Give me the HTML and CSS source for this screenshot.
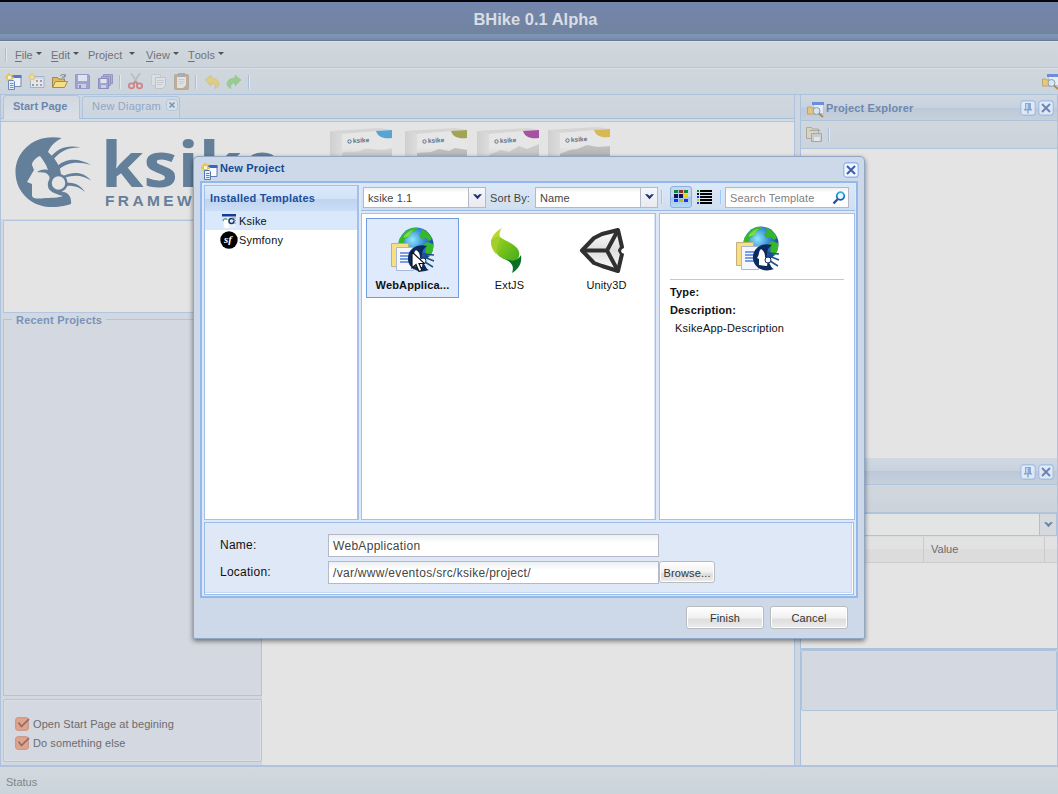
FILE: index.html
```
<!DOCTYPE html>
<html lang="en">
<head>
<meta charset="utf-8">
<title>BHike 0.1 Alpha</title>
<link rel="stylesheet" href="styles.css">
</head>
<body>
<svg class="defs" width="0" height="0" aria-hidden="true">
  <defs>
    <linearGradient id="boxside" x1="0" x2="1"><stop offset="0" stop-color="#cfcfcf"/><stop offset="1" stop-color="#dcdcdc"/></linearGradient>
    <linearGradient id="boxface" x1="0" y1="0" x2="0" y2="1"><stop offset=".45" stop-color="#e6e6e6"/><stop offset="1" stop-color="#b2b2b2"/></linearGradient>
    <radialGradient id="sea" cx=".4" cy=".35" r=".7"><stop offset="0" stop-color="#8fe9fa"/><stop offset=".45" stop-color="#3a8fdc"/><stop offset="1" stop-color="#122c8a"/></radialGradient>
    <linearGradient id="leaf" x1="0" y1="0" x2="1" y2="1"><stop offset="0" stop-color="#9bd21c"/><stop offset="1" stop-color="#3fa81c"/></linearGradient>
    <linearGradient id="lens" x1="0" y1="0" x2="0" y2="1"><stop offset="0" stop-color="#35b0dc"/><stop offset="1" stop-color="#1d55a8"/></linearGradient>
    <symbol id="head" viewBox="0 0 78 70">
      <path d="M46.700 1C20-4 .5 14 .5 35S18 71 38 70c8 0 14-2 18-3 1-8-4-12-8-12-8-3-8-15-2-17 0-8-6-17-13-23 3-7 8-11 13.700-14z"/>
      <path class="face" d="M25 19c-5 2-8 6-8 9l2 5-7 12 5 2v12c1 3 7 3 13 2 10 0 16-1 18-2-8-2-15-5-15-10-1-5 3-7 1-10-3-5-7-3-12-4 3-2 6-3 11-2-2-6-5-10-8-14z"/>
      <circle class="ring" cx="43.500" cy="46" r="8"/>
      <path class="hair" d="M34 22C43 10 53 8 66 10.500 54 10 46 13 37 24zM40 31c11-11 24-10 36-3-14-4-24-3-34 6zM48 39c11-5 21-4 28 4.500-9-6-17-6-27-2.500zM52 46c8-1 14 3 18 9-6-5-11-7-18-6z"/>
    </symbol>
    <symbol id="newproj" viewBox="0 0 17 17">
      <path fill="#f8fafd" stroke="#5d79b4" d="M5.500 3.500h10.500v10h-10.500z"/><path fill="#3b64c8" d="M5 2h11.500v3h-11.500z"/>
      <path fill="#f4c430" d="M3 0h2l.3 2L7 1l1 1-1.200 1.700L9 4v2l-2 .2L7.500 8 6 8.500 4.500 7 3 8.500 1.500 8 2 6 0 5.500v-2L2 3.500 1 2l1-1 1 .7z"/><path fill="#fff8be" d="M3 3h3v3h-3z"/>
      <path fill="#e9f1fc" stroke="#5078ba" d="M3.500 7.500h5l1 1v8h-6z"/><path stroke="#5b82cc" d="M5 10.500h3.500M5 12.500h3.500M5 14.500h3.500"/>
    </symbol>
    <symbol id="newdiag" viewBox="0 0 17 17">
      <path fill="#f6f8fc" stroke="#8195b8" d="M2.500 3.500h13.500v11h-13.500z"/><path fill="#d7deea" d="M3 4h12.500v2h-12.500z"/>
      <path fill="#cd625c" d="M8 7h2v2h-2zM12 11h2v2h-2z"/><path fill="#4178c8" d="M12 7h2v2h-2zM4 11h2v2h-2z"/><path fill="#53a55a" d="M8 11h2v2h-2z"/>
      <path fill="#f2c84b" d="M3 0h1.500l.5 2 2-1 .5 1-1 1.500L8 4v1l-2 .5L7 7l-1 1-2-1.500L2 8 1 7l1-2-2-.5v-1l2-.5-1-1.500 1-1z"/><path fill="#fff8be" d="M3 3h2v2h-2z"/>
    </symbol>
    <symbol id="folder" viewBox="0 0 17 17">
      <path fill="#e0b640" stroke="#94742c" d="M1.500 14.500v-10h5l1 1.500h6v3"/><path fill="#ffe174" stroke="#9b7a30" d="M1.500 14.500l3-6h12l-3 6z"/><path fill="none" stroke="#5b6a7c" d="M9 3c2-2 4-2 5 0m0 1V1m0 3h-3"/>
    </symbol>
    <symbol id="disk" viewBox="0 0 17 17">
      <path fill="#7c7bc8" stroke="#6a68b4" d="M1.500 1.500h13l1 1v13h-14z"/><path fill="#eef1fa" d="M4 2h9v6h-9z"/><path fill="#c9cbe6" d="M4 11h8v4h-8z"/><path fill="#55529d" d="M5 12h2v3h-2z"/>
    </symbol>
    <symbol id="disks" viewBox="0 0 17 17">
      <path fill="#8f8dcc" stroke="#6361ae" d="M6.500 1.500h9v9h-9z"/><path fill="#8f8dcc" stroke="#6361ae" d="M4.500 3.500h9v9h-9z"/><path fill="#7c7bc8" stroke="#5553a5" d="M1.500 5.500h10v10h-10z"/><path fill="#eef1fa" d="M3.500 6h6v4h-6z"/><path fill="#c9cbe6" d="M4 12h5v3h-5z"/>
    </symbol>
    <symbol id="cut" viewBox="0 0 17 17">
      <path fill="none" stroke="#a2abb6" stroke-width="1.700" d="M4 0l6.500 10M13 0L6.500 10"/><ellipse cx="4.500" cy="12.800" rx="2.700" ry="2.500" fill="none" stroke="#d54240" stroke-width="1.800"/><ellipse cx="12.500" cy="12.800" rx="2.700" ry="2.500" fill="none" stroke="#d54240" stroke-width="1.800"/><path stroke="#d54240" stroke-width="1.800" d="M6 11l2.500-2 2.500 2"  fill="none"/>
    </symbol>
    <symbol id="copy" viewBox="0 0 17 17">
      <path fill="#eee" stroke="#bbb" d="M1.500 1.500h9v11h-9z"/><path fill="#f3f3f3" stroke="#aaa" d="M5.500 4.500h10v8l-3 3h-7z"/><path stroke="#bbb" d="M7 7.500h7M7 9.500h7M7 11.500h5"/>
    </symbol>
    <symbol id="paste" viewBox="0 0 17 17">
      <rect x="1.500" y="1.500" width="14" height="15" rx="1" fill="#b58d5c" stroke="#a08a6d"/><path fill="#eeeeec" d="M4 4h9v8l-3 3H4z"/><path fill="#8d8d8d" d="M5 0h7v4h-7z"/><path stroke="#c5c5c5" d="M5.500 6.500h6M5.500 8.500h6M5.500 10.500h5"/>
    </symbol>
    <symbol id="undo" viewBox="0 0 17 17"><path fill="#ecc934" stroke="#c9a33c" stroke-width=".6" d="M2 7l6-5v3c5 0 8 3 8 6 0 2-2 4-4 4.500 1-3 0-5.500-4-5.500v3z"/></symbol>
    <symbol id="redo" viewBox="0 0 17 17"><path fill="#6cc850" stroke="#69a968" stroke-width=".6" d="M15 7L9 2v3c-5 0-8 3-8 6 0 2 2 4 4 4.500-1-3 0-5.500 4-5.500v3z"/></symbol>
    <symbol id="explorer" viewBox="0 0 17 17">
      <path fill="#eef3fb" stroke="#b5c2da" d="M6.500 2.500h10v10h-10z"/><path fill="#557dd8" d="M5 1h12v3h-12z"/><path fill="#f1c65b" stroke="#af8432" stroke-width=".7" d="M.5 13V6h3l1 1h4v6z"/><circle cx="9.500" cy="10" r="3.500" fill="#d8ecf6" stroke="#7893aa"/><path stroke="#a67b3c" stroke-width="2" d="M12 12.500l4 3.500"/>
    </symbol>
    <symbol id="x" viewBox="0 0 16 16"><rect x=".75" y=".75" width="14.500" height="14.500" rx="3" fill="#f0f6ff" stroke="#94b8ec" stroke-width="1.300"/><path d="M4 4l8 8M12 4l-8 8" stroke="#3e5da7" stroke-width="2"/></symbol>
    <symbol id="pin" viewBox="0 0 16 16"><rect x=".75" y=".75" width="14.500" height="14.500" rx="3" fill="#f0f6ff" stroke="#94b8ec" stroke-width="1.300"/><path fill="#6695cf" d="M5 3h6v6h1v1.500H8.700v3H7.300v-3H4V9h1z"/><path fill="#b9d3f2" d="M6 4h2v5H6z"/></symbol>
    <symbol id="web" viewBox="0 0 46 46">
      <circle cx="27" cy="18" r="17.500" fill="url(#sea)"/>
      <path fill="#35b82a" d="M12 10C16 3 23 0 29 1l-3 3-4 1-1 4-5 3-2 7-4-1c-1-3 0-6 2-8zM32 2c6 2 9 5 11 10l-3 2-3-3-5 1-2-4 3-2zM38 15l6 2c1 5-1 10-4 13l-4-5 1-4-3-3z"/>
      <path fill="#9bea57" opacity=".7" d="M15 9c4-5 7-6 10-6l-3 2-1 4-6 2z"/>
      <path fill="#f7df86" stroke="#c4b078" d="M2.500 16.500h17v23h-17z"/>
      <path fill="#f4f7ff" stroke="#a7b8d8" d="M7.500 20.500h17v23h-17z"/><path stroke="#5381d9" stroke-width="1.400" d="M11 26h11M11 29h11M11 32h11M11 35h11"/>
      <path fill="#0b2a5e" d="M38 19C27 16 18 23 19 33c1 9 11 14 21 10-3-1-3-4-5-6-3-3-3-5-2-8 1-4-1-5 5-10z"/>
      <path fill="#fff" d="M27 23c-3 3-1 5-4 9l2 1v6l8 1 1-6-3-3c0-4-1-6-4-8z"/><circle cx="34" cy="34" r="3" fill="#fff" stroke="#0b2a5e"/><path fill="none" stroke="#214e88" stroke-width="1.500" d="M33 27l12 1M35 30l10 4M36 35l8 5"/>
    </symbol>
  </defs>
</svg>

<div class="app">
  <header class="title">BHike 0.1 Alpha</header>
  <nav class="menubar"><i class="sep"></i>
    <span class="mi file"><u>F</u>ile</span><span class="mi edit"><u>E</u>dit</span><span class="mi proj">Project</span><span class="mi view"><u>V</u>iew</span><span class="mi tools"><u>T</u>ools</span>
  </nav>
  <div class="toolbar">
    <svg class="ic strong"><use href="#newproj"/></svg><svg class="ic"><use href="#newdiag"/></svg><svg class="ic strong"><use href="#folder"/></svg><svg class="ic"><use href="#disk"/></svg><svg class="ic"><use href="#disks"/></svg><i class="sep"></i>
    <svg class="ic"><use href="#cut"/></svg><svg class="ic faint"><use href="#copy"/></svg><svg class="ic"><use href="#paste"/></svg><i class="sep"></i>
    <svg class="ic"><use href="#undo"/></svg><svg class="ic"><use href="#redo"/></svg><i class="sep"></i>
    <svg class="ic last"><use href="#explorer"/></svg>
  </div>
  <main class="work">
    <section class="left">
      <div class="tabs"><div class="tab on">Start Page</div><div class="tab">New Diagram<svg class="tabx" viewBox="0 0 12 12"><rect x=".5" y=".5" width="11" height="11" rx="3"/><path d="M3.500 3.500l5 5M8.500 3.500l-5 5"/></svg></div></div>
      <div class="strip"></div>
      <div class="start">
        <div class="brand">
          <svg class="headlogo"><use href="#head"/></svg>
          <svg class="wordmark" viewBox="0 0 190 86"><text class="w1" x="-4" y="63" textLength="181" lengthAdjust="spacingAndGlyphs">ksike</text><text class="w2" x="0" y="81.500">FRAMEWORK</text></svg>
          <svg class="boxes" viewBox="0 0 284 90">
            <g><path fill="url(#boxside)" d="M0 4L12 7v83H0z"/><path fill="#d5d5d5" d="M0 4L50 1l12 2-50 4z"/><path fill="url(#boxface)" d="M12 7l50-4v40H12z"/><path fill="#57a4d4" d="M46 4l16-1v8c-9 1-14-1-16-7z"/><path fill="#aaa" d="M12 26c8-3 13 1 20-3s15 3 30-2v18H12z" opacity=".3"/><circle cx="19.500" cy="14.500" r="1.700" class="mini"/><text x="23" y="16" transform="rotate(-3 23 16)">ksike</text></g>
            <g transform="translate(75 0)"><path fill="url(#boxside)" d="M0 4L12 7v83H0z"/><path fill="#d5d5d5" d="M0 4L50 1l12 2-50 4z"/><path fill="url(#boxface)" d="M12 7l50-4v40H12z"/><path fill="#a0a454" d="M46 4l16-1v8c-9 1-14-1-16-7z"/><path fill="#999" d="M12 26l14-1 8-3 10 2 6-3 12 2v10H12z" opacity=".5"/><circle cx="19.500" cy="14.500" r="1.700" class="mini"/><text x="23" y="16" transform="rotate(-3 23 16)">ksike</text></g>
            <g transform="translate(147 0)"><path fill="url(#boxside)" d="M0 4L12 7v83H0z"/><path fill="#d5d5d5" d="M0 4L50 1l12 2-50 4z"/><path fill="url(#boxface)" d="M12 7l50-4v40H12z"/><path fill="#a353a1" d="M46 4l16-1v8c-9 1-14-1-16-7z"/><path fill="#aaa" d="M12 28l12-5 8 2 10-6 8 3 12-5v18H12z" opacity=".45"/><circle cx="19.500" cy="14.500" r="1.700" class="mini"/><text x="23" y="16" transform="rotate(-3 23 16)">ksike</text></g>
            <g transform="translate(218 -1)"><path fill="url(#boxside)" d="M0 4L12 7v83H0z"/><path fill="#d5d5d5" d="M0 4L50 1l12 2-50 4z"/><path fill="url(#boxface)" d="M12 7l50-4v40H12z"/><path fill="#d6b954" d="M46 4l16-1v8c-9 1-14-1-16-7z"/><path fill="#888" d="M12 28l10-4 7-1 10-4 11 2 12-1v18H12z" opacity=".4"/><circle cx="19.500" cy="14.500" r="1.700" class="mini"/><text x="23" y="16" transform="rotate(-3 23 16)">ksike</text></g>
          </svg>
        </div>
        <div class="sidecol">
          <div class="news"></div>
          <fieldset class="recent"><legend>Recent Projects</legend></fieldset>
          <div class="opts">
            <label><svg viewBox="0 0 15 14"><rect x=".7" y=".7" width="12.600" height="12.600" rx="2"/><path d="M3.500 5.500l3 4L14 2"/></svg>Open Start Page at begining</label>
            <label><svg viewBox="0 0 15 14"><rect x=".7" y=".7" width="12.600" height="12.600" rx="2"/><path d="M3.500 5.500l3 4L14 2"/></svg>Do something else</label>
          </div>
        </div>
      </div>
    </section>
    <aside class="right">
      <div class="phead"><svg class="ic strong"><use href="#explorer"/></svg><b>Project Explorer</b><svg class="tool push"><use href="#pin"/></svg><svg class="tool"><use href="#x"/></svg></div>
      <div class="ptools"><svg class="pic" viewBox="0 0 17 17"><path fill="#ddd2ae" stroke="#96938a" d="M.5 12.500V1.500h5l1 1.500h6v9.500zM3.500 4.500h11"/><path fill="#c5c7ca" stroke="#898f99" d="M5.500 7.500h10v8h-10z"/><path fill="#eee" d="M8 11h6v4H8z"/></svg><i class="sep"></i></div>
      <div class="tree"></div>
      <div class="phead two"><svg class="tool push"><use href="#pin"/></svg><svg class="tool"><use href="#x"/></svg></div>
      <div class="ptools two"></div>
      <div class="combo wide"><span></span><i class="arr"><svg viewBox="0 0 10 6"><path d="M0 0h3l2 2 2-2h3L5 5.500z"/></svg></i></div>
      <div class="ghead"><span></span><span>Value</span><span></span></div>
      <div class="gbody"></div>
      <div class="desc"></div>
      <div class="rest"></div>
    </aside>
  </main>
  <footer class="status">Status</footer>
</div>

<div class="dialog" role="dialog">
  <div class="dhead"><svg class="ic"><use href="#newproj"/></svg><b>New Project</b><svg class="tool push"><use href="#x"/></svg></div>
  <div class="dbody">
    <div class="cols">
      <div class="tpl">
        <div class="tplhead">Installed Templates</div>
        <div class="node sel"><svg viewBox="0 0 18 18"><path fill="#e8eef5" d="M3 3h13v13H3z"/><path fill="#173c98" d="M2 2h14v2.500H2z"/><path fill="none" stroke="#57ad83" stroke-width="1.500" d="M3 9c1-3 3-3 4-1"/><path fill="#fff" d="M4 8h4l1 8H4z"/><circle cx="11.500" cy="9" r="2.500" fill="none" stroke="#163d70" stroke-width="1.500"/><path stroke="#8093ae" d="M12 6h4M13 8.500h3M14 11h2"/></svg>Ksike</div>
        <div class="node"><svg viewBox="0 0 18 18"><circle cx="9" cy="9" r="8.700"/><text x="4" y="12" class="sf">sf</text></svg>Symfony</div>
      </div>
      <div class="mainc">
        <div class="dtools">
          <div class="combo c1"><span>ksike 1.1</span><i class="arr"><svg viewBox="0 0 10 6"><path d="M0 0h3l2 2 2-2h3L5 5.500z"/></svg></i></div>
          <span class="sortby">Sort By:</span>
          <div class="combo c2"><span>Name</span><i class="arr"><svg viewBox="0 0 10 6"><path d="M0 0h3l2 2 2-2h3L5 5.500z"/></svg></i></div>
          <i class="sep a"></i>
          <div class="vbtn"><svg viewBox="0 0 16 16" shape-rendering="crispEdges"><path fill="#128234" d="M1 1h4v3H1zM11 1h4v3h-4z"/><path fill="#943119" d="M6 1h4v3H6z"/><path fill="#101060" d="M1 5h4v4H1zM6 5h4v4H6z"/><path fill="#f4cd19" d="M11 5h4v4h-4z"/><path fill="#1635ee" d="M1 10h4v3H1zM11 10h4v3h-4z"/><path fill="#c7b919" d="M6 10h4v3H6z"/><path stroke="#a9cbee" stroke-width="1" d="M5.500 0v14M10.500 0v14"/></svg></div>
          <svg class="listic" viewBox="0 0 16 16" shape-rendering="crispEdges"><path d="M4 1h12v2H4zM4 4h12v2H4zM4 7h12v2H4zM4 10h12v2H4zM4 13h12v2H4zM1 4h2v2H1z"/><path fill="#00902a" d="M1 1h2v2H1z"/><path fill="#1635ee" d="M1 7h2v2H1zM1 13h2v2H1z"/><path fill="#d9c91b" d="M1 10h2v2H1z"/></svg>
          <i class="sep b"></i>
          <div class="search"><span>Search Template</span><svg viewBox="0 0 14 14"><circle cx="8.500" cy="5" r="3.800" fill="#e7f8fe" stroke="url(#lens)" stroke-width="1.800"/><path d="M5.600 8.300L1.500 12.500" stroke="#1d4f9c" stroke-width="2.300"/></svg></div>
        </div>
        <div class="panes">
          <div class="gallery">
            <div class="item on"><svg viewBox="1 0 46 46"><use href="#web" width="46" height="46"/></svg><span>WebApplica...</span></div>
            <div class="item"><svg viewBox="4 0 46 46"><path fill="#bdd62b" d="M19 1C5 9 6 19 13 27c7-3 7-9 5-14-2-5-2-8 1-12z"/><path fill="url(#leaf)" d="M17 10c-1 7-5 10-3 17 4 5 12 7 16 9 7-4 8-10 4-15-4-5-12-7-17-11z"/><path fill="#087025" d="M38 28c-3 6-9 7-15 4 7 5 8 8 6 14 8-5 10-11 9-18z"/><path fill="#8fc928" opacity=".6" d="M8 13c0 6 3 11 7 14l3-9-2-9z"/></svg><span>ExtJS</span></div>
            <div class="item"><svg class="unity" viewBox="0 0 46 46"><defs><linearGradient id="un" x1="0" y1="0" x2="0" y2="1"><stop offset="0" stop-color="#fff"/><stop offset=".5" stop-color="#ddd"/><stop offset="1" stop-color="#fff"/></linearGradient></defs><path fill="url(#un)" stroke="#303030" stroke-width="4" stroke-linejoin="round" d="M3 23.500L15 11l8-4 16-4 4 17-2 3.500 2 3.500-4 17-16-5-8-3z"/><path fill="none" stroke="#303030" stroke-width="4" d="M3 23.500h25M28 23.500L39 3M28 23.500L39 44"/><path fill="#fff" d="M43 22l3-1v6l-3-1-1-2z"/></svg><span>Unity3D</span></div>
          </div>
          <div class="preview"><svg viewBox="0 0 46 46"><use href="#web"/></svg><hr><b>Type:</b><b>Description:</b><p>KsikeApp-Description</p></div>
        </div>
      </div>
    </div>
    <div class="form">
      <div class="frow"><label>Name:</label><div class="field">WebApplication</div></div>
      <div class="frow"><label>Location:</label><div class="field">/var/www/eventos/src/ksike/project/</div><div class="btn browse">Browse...</div></div>
    </div>
  </div>
  <div class="actions"><div class="btn">Finish</div><div class="btn">Cancel</div></div>
</div>
<svg class="cursor" viewBox="0 0 14 22"><path d="M1 1v16l4-3.500 3 7 3-1.300-3-6.700h5.500z"/></svg>
</body>
</html>
```

FILE: styles.css
```
* { box-sizing: border-box; }
body { margin: 0; width: 1058px; height: 794px; overflow: hidden; font: 11px/14px "Liberation Sans", Arial, sans-serif; color: #6b6c6f; background: #e4e4e4; }
svg { display: block; flex: none; }
.defs { position: absolute; }
.app { height: 794px; display: flex; flex-direction: column; }
.app > *, .left > *, .right > * { flex: none; }

.title { height: 41px; border-top: 2px solid #07070b; border-bottom: 1px solid #667994; padding: 8px 0 0 13px; text-align: center; font-weight: bold; font-size: 16.500px; line-height: 18px; color: #dadde3;
  background: linear-gradient(#7486ac, #71839f 32px, #8097b4 32px, #7f94b4 34px, #7389a8); }
.menubar { height: 27px; display: flex; align-items: center; border-top: 1px solid #dce1e5; border-bottom: 1px solid #b9c9d4; background: linear-gradient(#d0d7dd, #ccd4dc); padding: 1px 0 0 5px; }
.mi { display: flex; font-size: 11px; color: #717276; white-space: pre; }
.mi u { text-underline-offset: 2px; }
.mi::after { content: ""; align-self: center; margin: -3px 0 0 3px; border: 3px solid transparent; border-top: 3px solid #505255; border-bottom: 0; }
.file { width: 27px; margin-left: 8px; } .edit { width: 28px; margin-left: 9px; } .proj { width: 49px; margin-left: 9px; } .proj::after { margin-left: 7px; } .view { width: 33px; margin-left: 9px; } .tools { margin-left: 9px; }
.sep { flex: none; width: 2px; height: 14px; border-left: 1px solid #a7bfdc; border-right: 1px solid #e2e8ef; }
.toolbar { height: 26px; display: flex; align-items: center; gap: 6px; padding-left: 5px; border-top: 1px solid #d8dee3; background: linear-gradient(#d0d7dd, #cbd3dc); overflow: hidden; }
.ic { width: 17px; height: 17px; opacity: .55; }
.toolbar .sep { margin: 0 0 0 -1px; }
.strong { opacity: .8; } .faint { opacity: .4; }
.toolbar .last { margin-left: 786px; opacity: .8; }

.work { height: 673px; display: flex; background: #ced6e2; border-bottom: 2px solid #b0c2dc; border-top: 1px solid #adc3dc; }
.left { width: 795px; border-right: 1px solid #aec2dc; border-left: 1px solid #aec2dc; display: flex; flex-direction: column; }
.tabs { height: 24px; display: flex; align-items: flex-end; gap: 2px; padding-left: 2px; background: linear-gradient(#d0d7dd, #cbd3dd); border-bottom: 1px solid #a8bfdb; }
.tab { width: 98px; height: 22px; border: 1px solid #acc4df; border-bottom: 0; border-radius: 4px 4px 0 0; color: #8fa7c6; letter-spacing: .2px; line-height: 19px; padding: 0 0 0 9px; display: flex; white-space: nowrap; background: linear-gradient(#d2d8df, #cad6e2); }
.tab.on { width: 77px; height: 24px; margin-bottom: -1px; padding-top: 1px; color: #6c87ad; font-weight: bold; letter-spacing: 0; background: linear-gradient(#d1d8df, #dbe0e7); }
.tabx { width: 12px; height: 12px; margin: 2px 0 0 5px; fill: #d8dfe6; stroke: #b2c6dc; }
.tabx path { stroke: #7893b0; stroke-width: 1.500; }
.strip { height: 3px; background: #d4dbe5; border-bottom: 1px solid #b1c4db; }
.start { height: 643px; background: #e4e4e4; overflow: hidden; }
.brand { height: 97px; display: flex; padding-left: 14px; align-items: flex-start; }
.headlogo { width: 78px; height: 70px; margin-top: 15px; fill: #647f9a; }
.face { fill: #e4e4e4; }
.ring { fill: #e4e4e4; stroke: #647f9a; stroke-width: 2.500px; }
.wordmark { width: 190px; height: 86px; margin: 2px 0 0 12px; fill: #647f9a; overflow: visible; }
.w1 { font: bold 63px "Open Sans", sans-serif; }
.w2 { font: bold 15.500px "Liberation Sans", sans-serif; letter-spacing: 3.400px; }
.boxes { width: 284px; height: 90px; margin: 5px 0 0 35px; }
.boxes text { font: bold 6.500px "Liberation Sans", sans-serif; fill: #566e89; }
.mini { fill: none; stroke: #566e89; }
.sidecol { width: 261px; height: 546px; padding: 1px 0 3px 2px; border-right: 2px solid #cfd6e2; background: #d1d8e2; display: flex; flex-direction: column; }
.news { width: 258px; height: 93px; background: #e4e4e4; border: 1px solid #b1c6de; }
.recent { margin: 0; width: 259px; height: 385px; padding: 0 0 0 8px; border: 1px solid #b8c2d3; background: #d4d8e0; }
.recent legend { padding: 0 4px; font-weight: bold; line-height: 14px; color: #7993b7; letter-spacing: .2px; }
.opts { width: 259px; height: 63px; margin-top: 3px; border: 1px solid #b1c5dd; border-radius: 2px; box-shadow: inset 0 0 0 1px #dce0e5; background: #d4d8e0; padding: 17px 0 0 11px; }
.opts label { display: flex; height: 19px; gap: 3px; line-height: 15px; letter-spacing: .08px; }
.opts svg { width: 15px; height: 14px; }
.opts rect { fill: #e2a38b; stroke: #c98f7d; }
.opts path { fill: none; stroke: #86706a; stroke-width: 1.700; }

.right { width: 258px; margin-left: 5px; border-left: 1px solid #aac0db; border-right: 1px solid #b0c2dc; background: #e4e4e4; }
.phead { height: 26px; display: flex; align-items: center; padding: 0 3px 0 6px; gap: 2px; border-bottom: 1px solid #adc3dc; color: #6d88ae; background: linear-gradient(#cfd8e1, #c8d2df 50%, #bcc9d9 50%, #c7d0da); }
.phead b { letter-spacing: .15px; }
.phead .ic { margin-top: 3px; }
.tool { width: 16px; height: 16px; }
.phead .tool { opacity: .65; }
.push { margin-left: auto; }
.ptools { height: 28px; display: flex; align-items: center; gap: 5px; padding-left: 5px; border-bottom: 1px solid #b2c5db; background: linear-gradient(#d1d7dc, #cbd3dc); }
.pic { width: 17px; height: 17px; opacity: .65; }
.tree { height: 310px; border-bottom: 1px solid #d0d8df; }
.combo { display: flex; background: linear-gradient(#f0f1f2, #fff 5px); border: 1px solid #b5b8c8; color: #444; line-height: 20px; letter-spacing: .1px; }
.combo span { flex: 1; padding-left: 4px; }
.arr { width: 17px; border-left: 1px solid #b5b8c8; background: linear-gradient(#f6f7f8, #e9eaf0); display: flex; align-items: center; justify-content: center; }
.arr svg { width: 9px; height: 6px; fill: #17357c; }
.wide { height: 23px; background: #e3e4e4; border-color: #b0c2d9; }
.wide .arr { background: #d6dadd; border-color: #b4bfcb; } .wide .arr svg { fill: #6f83a9; }
.ghead { height: 27px; display: flex; border-top: 1px solid #d9dde2; border-bottom: 1px solid #cecece; background: linear-gradient(#e2e2e2 50%, #dcdcdc 50%); }
.ghead span { flex: none; width: 121px; border-left: 1px solid #cacaca; padding-left: 7px; line-height: 25px; }
.ghead span:first-child { width: 122px; border: 0; }
.ghead span:last-child { width: 12px; padding: 0; }
.gbody { height: 87px; border-bottom: 2px solid #adc2da; }
.desc { height: 61px; background: #d4d8e0; border: 1px solid #aec4dd; border-radius: 2px; }
.status { height: 27px; padding: 8px 6px 0; color: #7f858b; background: linear-gradient(#d2d9de, #cbd3dc); }

.dialog { position: absolute; left: 193px; top: 156px; width: 672px; height: 483px; border: 1px solid #91a6c3; border-radius: 5px 5px 2px 2px; box-shadow: 0 2px 5px rgba(0,0,0,.5); background: #cdd9e8; padding: 0 6px; color: #111; }
.dhead { height: 24px; display: flex; align-items: center; color: #154a93; letter-spacing: .15px; padding: 0 0 2px 1px; gap: 2px; }
.dhead .ic { opacity: 1; width: 17px; height: 17px; margin-top: 6px; }
.dhead .push { margin: 3px -1px 0 auto; }
.dbody { height: 417px; border: 2px solid #94b8ec; background: #dfe8f6; padding: 1px 1px 2px; }
.cols { height: 337px; display: flex; gap: 2px; }
.tpl { flex: none; width: 155px; height: 335px; border: 1px solid #a3c0ea; border-right-width: 2px; background: #fff; margin: 1px 0 0 1px; }
.tplhead { height: 26px; padding-left: 5px; line-height: 25px; font-weight: bold; letter-spacing: .2px; color: #204f98; border-bottom: 1px solid #9abbe8; background: linear-gradient(#dce9fb, #d1e2f8 50%, #bdd3f0 50%, #cbdef6); margin-bottom: -1px; }
.node { height: 19px; display: flex; align-items: center; gap: 1px; padding-left: 15px; letter-spacing: .2px; }
.node svg { width: 18px; height: 18px; }
.sel { background: #d9e8fb; }
.sf { fill: #fff; font: italic bold 11px "Liberation Serif", serif; letter-spacing: 0; }
.mainc { flex: none; width: 494px; }
.dtools { height: 27px; display: flex; align-items: center; padding: 0 5px 0 2px; background: linear-gradient(#dce8f7, #d0deef); border-bottom: 1px solid #99bbe8; }
.dtools > * { flex: none; }
.dtools .combo { height: 21px; }
.c1, .c2 { width: 123px; }
.sortby { width: 49px; padding: 1px 0 0 4px; color: #444; white-space: nowrap; letter-spacing: .1px; }
.dtools .sep { border-left-color: #98c8ff; }
.a { margin: 0 7px 0 3px; }
.vbtn { width: 22px; height: 22px; padding: 2px; border: 1px solid #8eafd7; border-radius: 3px; background: linear-gradient(#c4d8ef 50%, #9fc6ee 50%, #b7d8f7); }
.vbtn svg { width: 16px; height: 16px; }
.listic { width: 16px; height: 16px; margin-left: 4px; }
.b { margin: 0 3px 0 8px; }
.search { width: 124px; height: 21px; background: linear-gradient(#f0f1f2, #fff 5px); border: 1px solid #b5b8c8; display: flex; align-items: center; justify-content: space-between; padding: 1px 2px 0 4px; color: #808080; white-space: nowrap; letter-spacing: .15px; }
.search svg { width: 14px; height: 14px; }
.panes { height: 307px; display: flex; gap: 3px; margin-top: 2px; }
.gallery { flex: none; width: 295px; border: 1px solid #a3c0ea; box-shadow: inset -1px 0 #d9e6f7; background: #fff; display: flex; gap: 4px; padding: 4px 0 0 4px; }
.item { flex: none; width: 93px; height: 80px; border: 1px solid transparent; display: flex; flex-direction: column; align-items: center; padding-top: 8px; gap: 5px; white-space: nowrap; letter-spacing: .15px; }
.item svg { width: 46px; height: 46px; }
.item .unity { margin-left: -9px; }
.item.on { background: #dfebfd; border-color: #6f9ee0; font-weight: bold; }
.preview { flex: none; width: 196px; border: 1px solid #a3c0ea; background: #fff; padding: 12px 10px; }
.preview > svg { width: 46px; height: 46px; margin-left: 64px; }
.preview hr { height: 1px; border: 0; background: #c8c8c8; margin: 7px 0 5px; width: 174px; }
.preview b { display: block; height: 18px; letter-spacing: .15px; }
.preview p { margin: 0 0 0 5px; letter-spacing: .2px; }
.form { height: 73px; margin: 1px 1px 0; border: 1px solid #99bbe8; box-shadow: inset -1px -1px #fff, inset -2px -2px #c4d8f5; background: #dfe8f6; padding: 10px 0 0 15px; }
.frow { display: flex; height: 27px; font-size: 12px; letter-spacing: .25px; }
.frow label { width: 108px; padding-top: 5px; }
.field { width: 331px; height: 23px; margin-top: 1px; border: 1px solid #b5b8c8; background: linear-gradient(#edf0f1, #fff 8px); padding-left: 4px; line-height: 22px; letter-spacing: .3px; color: #444; }
.btn { height: 23px; width: 78px; border: 1px solid #b9bcbf; border-radius: 3px; background: linear-gradient(#fff, #f1f1f1 50%, #dedede 60%, #ececec); box-shadow: inset 0 0 0 1px #fff; line-height: 23px; font-size: 11px; letter-spacing: .15px; text-align: center; color: #333; }
.browse { width: 56px; height: 22px; margin: 1px 0 0; white-space: nowrap; }
.actions { display: flex; justify-content: flex-end; gap: 6px; padding: 8px 10px; }
.cursor { position: absolute; left: 411px; top: 251px; width: 14px; height: 22px; fill: #fff; stroke: #111; stroke-width: 1.200; }
```
